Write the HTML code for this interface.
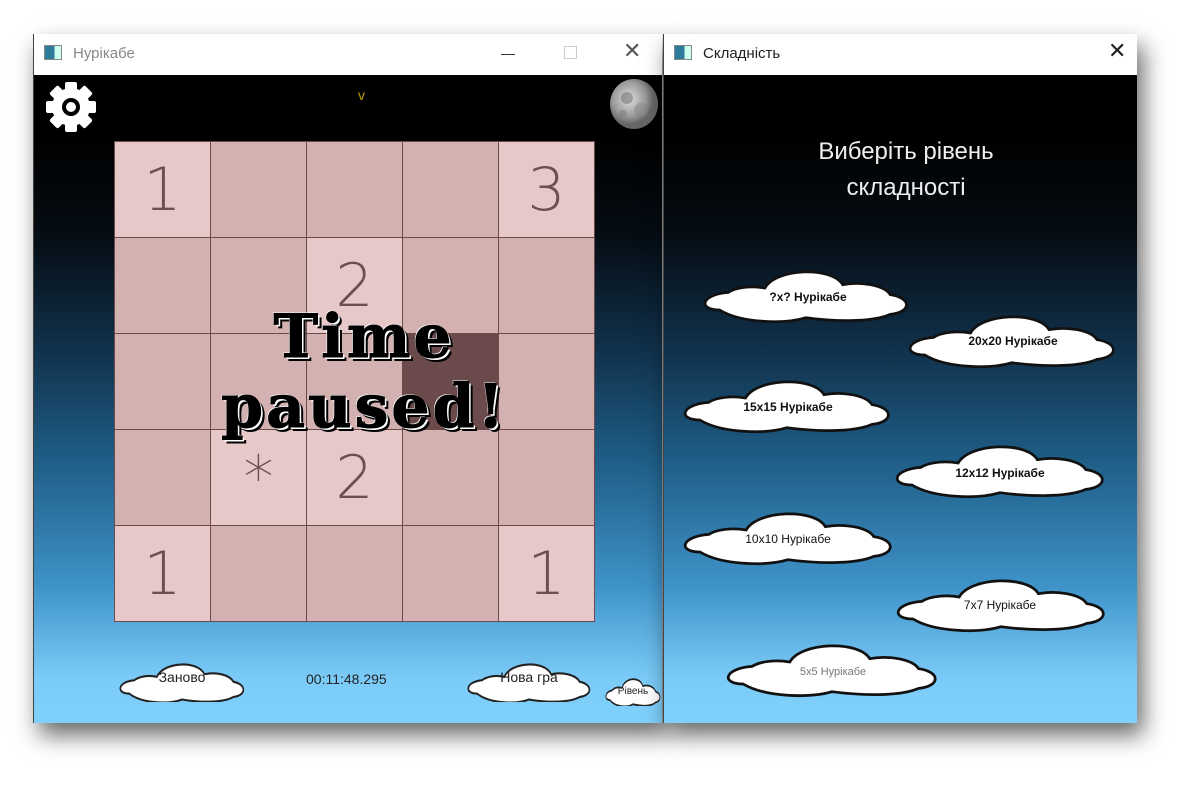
<!DOCTYPE html>
<html><head><meta charset="utf-8"><style>
*{margin:0;padding:0;box-sizing:border-box}
body{width:1202px;height:792px;background:#fff;position:relative;overflow:hidden;font-family:"Liberation Sans","DejaVu Sans",sans-serif}
.win{position:absolute;box-shadow:6px 12px 22px rgba(0,0,0,.6)}
.tb{position:absolute;left:0;top:0;right:0;height:41px;background:#fff;font-size:15px;color:#222}
.tb .ic{position:absolute;left:10px;top:11px;width:18px;height:15px;border:1px solid #888;background:linear-gradient(90deg,#2d7a9a 0 60%,#cfe 60%)}
.tb .t{position:absolute;left:39px;top:11px}
.content{position:absolute;left:0;top:41px;right:0;bottom:0;background:linear-gradient(#000 0%,#000 10%,#050d14 25%,#10304a 42%,#1f5f88 60%,#3f93c9 79%,#7bcbf8 93%,#80d0fc 100%)}
.a{position:absolute}
.cell{position:absolute;width:97px;height:97px;border:1.5px solid #6e4b4b;font-family:"DejaVu Sans",sans-serif;font-weight:200;font-size:60px;color:#6e4e4e;text-align:center;line-height:96px}
.L{background:#e7c8c8}.D{background:#d3b1b1}
.tp{position:absolute;font-family:"DejaVu Serif",serif;font-weight:bold;font-size:60px;color:#000;letter-spacing:3px;-webkit-text-stroke:1px #000;text-shadow:-1px -1px 0 #fff,2px 2px 0 #fff,4px 4px 0 #000;text-align:center}
</style></head><body>

<div class="win" style="left:33px;top:34px;width:629px;height:689px;border-left:1px solid #444">
 <div class="tb"><div class="ic"></div><div class="t" style="color:#888">Нурікабе</div>
  <div class="a" style="left:467px;top:20px;width:14px;height:1px;background:#333"></div>
  <div class="a" style="left:530px;top:12px;width:13px;height:13px;border:1px solid #ccc"></div>
  <div class="a" style="left:589px;top:4px;font-size:22px;color:#555">✕</div>
 </div>
 <div class="content">
  <svg class="a" style="left:10px;top:5px" width="54" height="54" viewBox="0 0 54 54"><g fill="#fff"><circle cx="27" cy="27" r="19"/><g><rect x="21" y="2" width="12" height="12" rx="2"/><rect x="21" y="40" width="12" height="12" rx="2"/><rect x="2" y="21" width="12" height="12" rx="2"/><rect x="40" y="21" width="12" height="12" rx="2"/></g><g transform="rotate(45 27 27)"><rect x="21" y="2" width="12" height="12" rx="2"/><rect x="21" y="40" width="12" height="12" rx="2"/><rect x="2" y="21" width="12" height="12" rx="2"/><rect x="40" y="21" width="12" height="12" rx="2"/></g></g><circle cx="27" cy="27" r="9" fill="#000"/><circle cx="27" cy="27" r="5" fill="#fff"/></svg>
  <div class="a" style="left:324px;top:12px;color:#b8a000;font-size:14px">v</div>
  <svg class="a" style="left:575px;top:3px" width="50" height="52"><defs><radialGradient id="m" cx="40%" cy="40%"><stop offset="0" stop-color="#ddd"/><stop offset=".7" stop-color="#999"/><stop offset="1" stop-color="#666"/></radialGradient></defs><ellipse cx="25" cy="26" rx="24" ry="25" fill="url(#m)"/><circle cx="18" cy="20" r="6" fill="#777" opacity=".6"/><circle cx="32" cy="32" r="7" fill="#888" opacity=".5"/><circle cx="14" cy="36" r="4" fill="#777" opacity=".5"/></svg>

  <div class="a" style="left:80px;top:66px">
   <div class="cell L" style="left:0;top:0">1</div><div class="cell D" style="left:96px;top:0"></div><div class="cell D" style="left:192px;top:0"></div><div class="cell D" style="left:288px;top:0"></div><div class="cell L" style="left:384px;top:0">3</div>
   <div class="cell D" style="left:0;top:96px"></div><div class="cell D" style="left:96px;top:96px"></div><div class="cell L" style="left:192px;top:96px">2</div><div class="cell D" style="left:288px;top:96px"></div><div class="cell D" style="left:384px;top:96px"></div>
   <div class="cell D" style="left:0;top:192px"></div><div class="cell D" style="left:96px;top:192px"></div><div class="cell D" style="left:192px;top:192px"></div><div class="cell" style="left:288px;top:192px;background:#6a4a4a"></div><div class="cell D" style="left:384px;top:192px"></div>
   <div class="cell D" style="left:0;top:288px"></div><div class="cell L" style="left:96px;top:288px">*</div><div class="cell L" style="left:192px;top:288px">2</div><div class="cell D" style="left:288px;top:288px"></div><div class="cell D" style="left:384px;top:288px"></div>
   <div class="cell L" style="left:0;top:384px">1</div><div class="cell D" style="left:96px;top:384px"></div><div class="cell D" style="left:192px;top:384px"></div><div class="cell D" style="left:288px;top:384px"></div><div class="cell L" style="left:384px;top:384px">1</div>
  </div>
  <div class="tp" style="left:110px;top:227px;width:440px;line-height:70px">Time<br>paused!</div>

  <svg class="a" style="left:82px;top:585px" width="132" height="42" viewBox="0 0 200 50" preserveAspectRatio="none"><path d="M20,40 C0,40 2,26 28,24 C36,19 50,18 62,20 C72,2 124,0 134,17 C150,14 172,17 178,26 C198,29 198,42 178,44 C160,52 122,50 100,47 C80,53 40,52 20,40 Z" fill="#fff" stroke="#222" stroke-width="2.5"/></svg>
  <div class="a" style="left:82px;top:594px;width:132px;text-align:center;font-size:14px;color:#222">Заново</div>
  <div class="a" style="left:272px;top:596px;font-size:14px;color:#222">00:11:48.295</div>
  <svg class="a" style="left:430px;top:585px" width="130" height="42" viewBox="0 0 200 50" preserveAspectRatio="none"><path d="M20,40 C0,40 2,26 28,24 C36,19 50,18 62,20 C72,2 124,0 134,17 C150,14 172,17 178,26 C198,29 198,42 178,44 C160,52 122,50 100,47 C80,53 40,52 20,40 Z" fill="#fff" stroke="#222" stroke-width="2.5"/></svg>
  <div class="a" style="left:430px;top:594px;width:130px;text-align:center;font-size:14px;color:#222">Нова гра</div>
  <svg class="a" style="left:570px;top:601px" width="58" height="30" viewBox="0 0 200 50" preserveAspectRatio="none"><path d="M20,40 C0,40 2,26 28,24 C36,19 50,18 62,20 C72,2 124,0 134,17 C150,14 172,17 178,26 C198,29 198,42 178,44 C160,52 122,50 100,47 C80,53 40,52 20,40 Z" fill="#fff" stroke="#222" stroke-width="3"/></svg>
  <div class="a" style="left:570px;top:611px;width:58px;text-align:center;font-size:10px;color:#222">Рівень</div>
 </div>
</div>

<div class="win" style="left:663px;top:34px;width:474px;height:689px;border-left:1px solid #444">
 <div class="tb"><div class="ic"></div><div class="t">Складність</div>
  <div class="a" style="left:444px;top:4px;font-size:22px;color:#222">✕</div>
 </div>
 <div class="content">
  <div class="a" style="left:0;width:484px;top:59px;text-align:center;color:#eee;font-size:24px;line-height:36px">Виберіть рівень<br>складності</div>
 </div>
</div>

<svg class="a" style="left:0;top:0;pointer-events:none" width="1202" height="792">
 <defs><path id="c" d="M20,40 C0,40 2,26 28,24 C36,19 50,18 62,20 C72,2 124,0 134,17 C150,14 172,17 178,26 C198,29 198,42 178,44 C160,52 122,50 100,47 C80,53 40,52 20,40 Z" fill="#fff" stroke="#111" stroke-width="2.5"/></defs>
 <g transform="translate(698,266) scale(1.08,1.1)"><use href="#c"/></g>
 <g transform="translate(903,311) scale(1.09,1.1)"><use href="#c"/></g>
 <g transform="translate(678,376) scale(1.09,1.1)"><use href="#c"/></g>
 <g transform="translate(890,441) scale(1.1,1.1)"><use href="#c"/></g>
 <g transform="translate(678,508) scale(1.1,1.1)"><use href="#c"/></g>
 <g transform="translate(891,575) scale(1.1,1.1)"><use href="#c"/></g>
 <g transform="translate(721,640) scale(1.11,1.1)"><use href="#c"/></g>
 <g font-family="Liberation Sans, sans-serif" font-size="12" text-anchor="middle" fill="#111">
  <text x="808" y="301" font-weight="bold">?x? Нурікабе</text>
  <text x="1013" y="345" font-weight="bold">20x20 Нурікабе</text>
  <text x="788" y="411" font-weight="bold">15x15 Нурікабе</text>
  <text x="1000" y="477" font-weight="bold">12x12 Нурікабе</text>
  <text x="788" y="543">10x10 Нурікабе</text>
  <text x="1000" y="609">7x7 Нурікабе</text>
  <text x="833" y="675" fill="#777" font-size="11">5x5 Нурікабе</text>
 </g>
</svg>
</body></html>
